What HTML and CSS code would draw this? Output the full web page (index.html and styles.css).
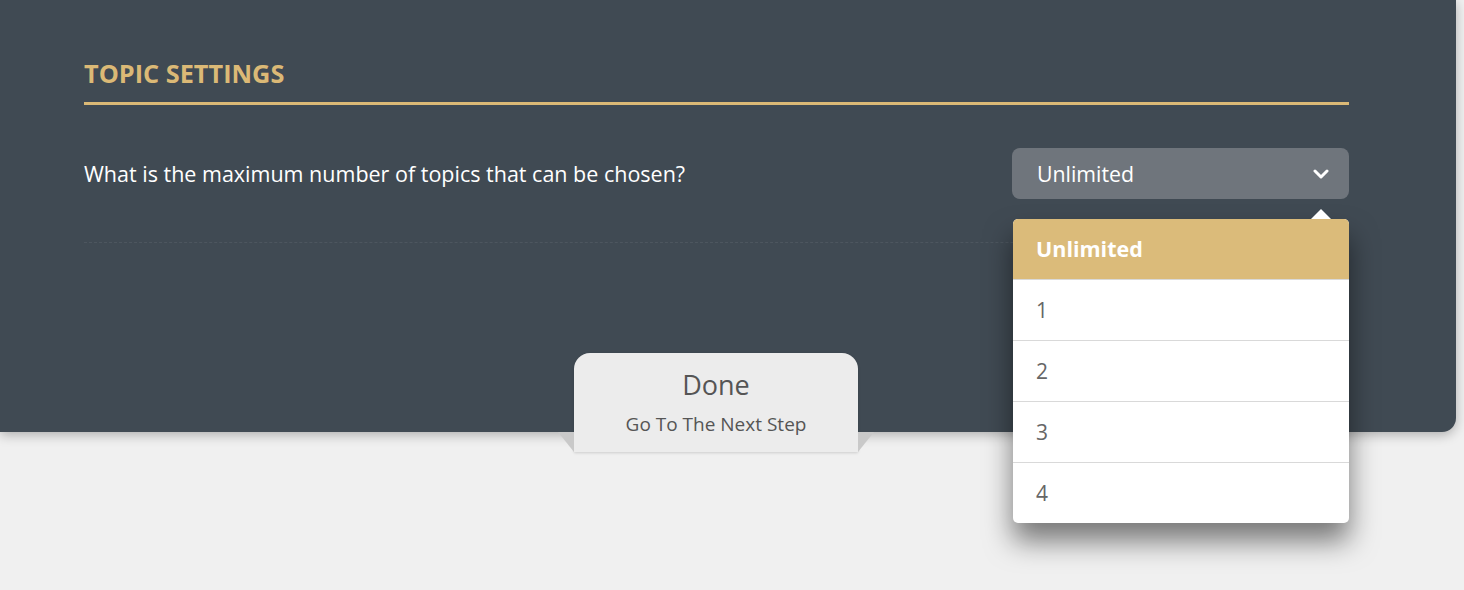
FILE: index.html
```html
<!DOCTYPE html>
<html lang="en">

<head>
    <meta charset="UTF-8">
    <meta name="viewport" content="width=device-width, initial-scale=1.0">
    <title>Topic Settings</title>
    <link rel="stylesheet" href="styles.css">
</head>

<body>
    <div class="panel">
        <h2 class="section-title">TOPIC SETTINGS</h2>

        <div class="setting-row">
            <label class="question" for="max-topics">What is the maximum number of topics that can be chosen?</label>
            <div class="select-wrap">
                <div class="select" id="max-topics">
                    <span>Unlimited</span>
                    <svg class="chevron" width="16" height="11" viewBox="0 0 16 11">
                        <polyline points="2,2 8,8 14,2" fill="none" stroke="#fff" stroke-width="3" stroke-linecap="round" stroke-linejoin="round" />
                    </svg>
                </div>
                <ul class="dropdown">
                    <li class="selected">Unlimited</li>
                    <li>1</li>
                    <li>2</li>
                    <li>3</li>
                    <li>4</li>
                </ul>
            </div>
        </div>

        <div class="footer">
            <button class="done-tab">
                <span class="done-title">Done</span>
                <span class="done-sub">Go To The Next Step</span>
            </button>
        </div>
    </div>
</body>

</html>
```

FILE: styles.css
```css
html,
body {
    min-height: 100vh;
}

body {
    margin: 0;
    background-color: #f0f0f0;
    font-family: "Open Sans", "Noto Sans", sans-serif;
}

.panel {
    position: relative;
    box-sizing: border-box;
    height: 432px;
    margin-right: 8px;
    padding: 54px 107px 0 84px;
    background-color: #404a53;
    border-bottom-right-radius: 14px;
    box-shadow: 0 3px 12px rgba(0, 0, 0, 0.28);
    display: flex;
    flex-direction: column;
}

.section-title {
    margin: 0;
    padding-bottom: 10px;
    border-bottom: 3px solid #dbb976;
    color: #dbb976;
    font-size: 25.3px;
    font-weight: 700;
    line-height: 38px;
}

.setting-row {
    display: flex;
    justify-content: space-between;
    align-items: center;
    margin-top: 43px;
    padding-bottom: 43px;
    border-bottom: 1px dashed rgba(255, 255, 255, 0.07);
}

.question {
    color: #fff;
    font-size: 21.5px;
}

.select-wrap {
    position: relative;
    width: 337px;
}

.select {
    display: flex;
    justify-content: space-between;
    align-items: center;
    height: 51px;
    padding: 0 20px 0 25px;
    box-sizing: border-box;
    background-color: #6f757c;
    border-radius: 8px;
    color: #fff;
    font-size: 21.3px;
}

.chevron {
    margin-top: 2px;
}

.dropdown {
    position: absolute;
    top: 71px;
    left: 1px;
    right: 0;
    margin: 0;
    padding: 0;
    list-style: none;
    background-color: #fff;
    border-radius: 5px;
    box-shadow: 0 18px 28px rgba(0, 0, 0, 0.5);
    z-index: 5;
}

.dropdown::before {
    content: "";
    position: absolute;
    top: -10px;
    right: 18px;
    border-left: 10px solid transparent;
    border-right: 10px solid transparent;
    border-bottom: 10px solid #fff;
}

.dropdown li {
    height: 60px;
    line-height: 60px;
    padding-left: 23px;
    border-top: 1px solid #d9d9d9;
    color: #666;
    font-size: 21px;
}

.dropdown li:first-child {
    border-top: none;
    border-radius: 5px 5px 0 0;
}

.dropdown li.selected {
    background-color: #dbbb7a;
    color: #fff;
    font-weight: 700;
    font-size: 21.5px;
}

.footer {
    margin-top: auto;
    display: flex;
    justify-content: center;
    padding-right: 1px;
}

.done-tab {
    position: relative;
    width: 284px;
    height: 99px;
    margin-bottom: -20px;
    padding: 0;
    border: none;
    border-radius: 16px 16px 0 0;
    background-color: #ececec;
    box-shadow: 0 1px 3px rgba(0, 0, 0, 0.15);
    font-family: inherit;
    color: #555;
    display: flex;
    flex-direction: column;
    align-items: center;
    cursor: pointer;
}

.done-tab::before,
.done-tab::after {
    content: "";
    position: absolute;
    bottom: 0;
    width: 0;
    height: 0;
    border-top: 20px solid #c9c9c9;
}

.done-tab::before {
    left: -16px;
    border-left: 16px solid transparent;
}

.done-tab::after {
    right: -16px;
    border-right: 16px solid transparent;
}

.done-title {
    margin-top: 14px;
    font-size: 27px;
    line-height: 36px;
}

.done-sub {
    margin-top: 8px;
    font-size: 19px;
    line-height: 26px;
}
```
